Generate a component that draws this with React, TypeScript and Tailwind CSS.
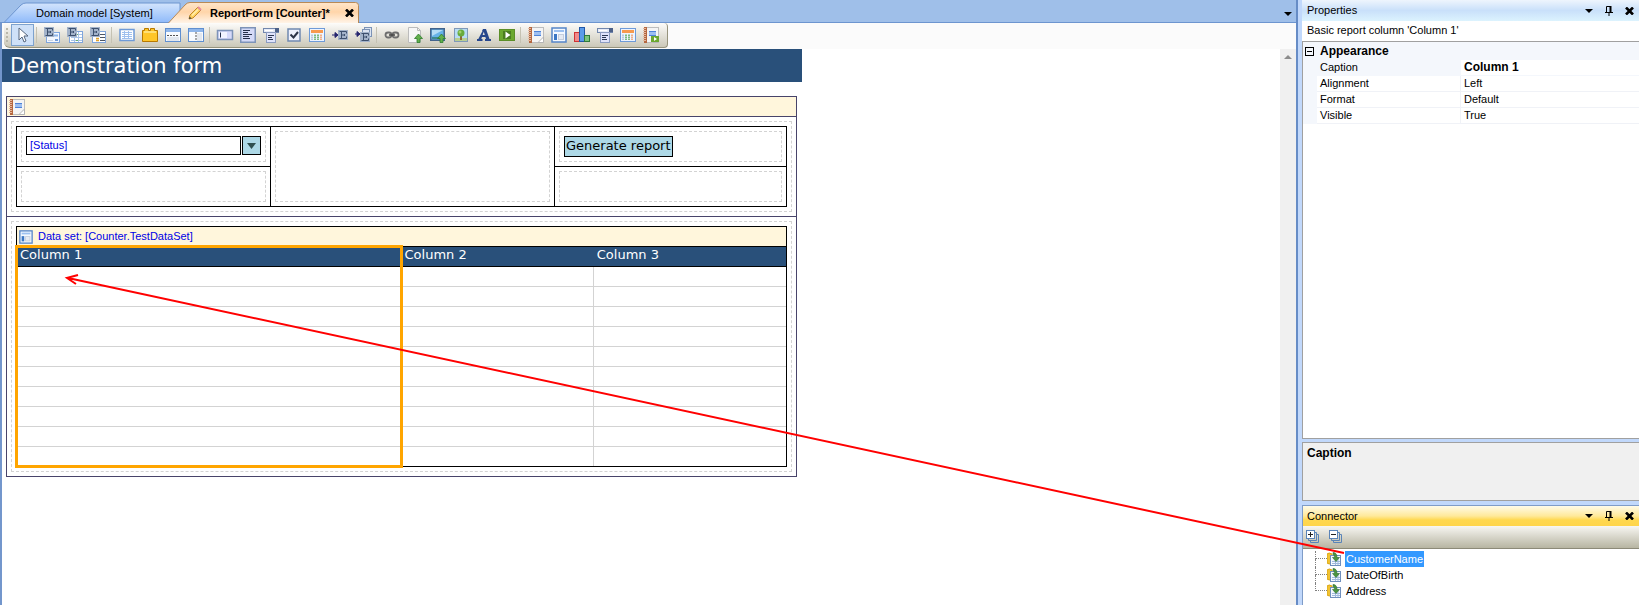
import type { ReactNode } from "react";

const E = () => (
  <g>
    <rect x="0" y="0" width="10" height="10" fill="#a3b3ca" />
    <path d="M1.500 1.500h7v2M3.500 1.500v7M1.500 8.500h7v-2M3.500 5h3M6.500 4v2" stroke="#3d506e" fill="none" />
  </g>
);

const Win = ({ children }: { children?: ReactNode }) => (
  <g>
    <rect x="0.5" y="1.5" width="15" height="13" fill="#f8fbff" stroke="#5f8fd0" />
    <rect x="1" y="2" width="14" height="3" fill="#8fb6ea" />
    {children}
  </g>
);

const Notebook = () => (
  <g>
    <rect x="2.5" y="0.5" width="13" height="15" fill="#f4f4f4" stroke="#bdbdbd" />
    <rect x="1" y="0" width="3" height="16" fill="#b5673f" />
    <path d="M0 1.5h3M0 3.5h3M0 5.5h3M0 7.5h3M0 9.5h3M0 11.5h3M0 13.5h3" stroke="#e3b79d" />
    <rect x="6" y="4" width="7" height="5" fill="#9dbff0" />
    <path d="M6 4.500h7M6 8.500h7" stroke="#4f83d8" />
    <path d="M10 15.500l5.500-5.500v5.500z" fill="#fff" stroke="#b5b5b5" />
  </g>
);

const DataForm = () => (
  <g>
    <rect x="1" y="1" width="14" height="14" fill="#f3f8ff" stroke="#5585c8" strokeWidth="1.500" />
    <rect x="3" y="3" width="10" height="2" fill="#9cc0f0" />
    <rect x="3" y="7" width="3" height="6" fill="#3b76c4" />
    <rect x="7.500" y="7.500" width="5" height="5" fill="#e6eaf2" stroke="#c5cedd" />
  </g>
);

const calendarDays = [7, 9, 11].flatMap((y) => [2, 5, 8, 11].map((x) => ({ x, y })));

const Calendar = () => (
  <g>
    <rect x="0.500" y="1.500" width="15" height="13" fill="#eef4ff" stroke="#6f9bd8" />
    <rect x="2" y="3" width="12" height="3" fill="#f79a4f" />
    {calendarDays.map(({ x, y }) => (
      <rect key={x + "-" + y} x={x} y={y + 0.5} width="2" height="1.500" fill={x === 11 ? "#f0b08a" : x === 2 ? "#b9c9dd" : "#7dbb80"} />
    ))}
  </g>
);

const DropForm = () => (
  <g>
    <rect x="0.500" y="1.500" width="15" height="4" fill="#e7ebf6" stroke="#7287ad" />
    <rect x="12" y="1" width="4" height="4" fill="#4c6189" />
    <rect x="3.500" y="5.500" width="9" height="10" fill="#dfe3fb" stroke="#8c9cc0" />
    <path d="M2 3.500h8" stroke="#fff" />
    <path d="M5 8.500h6M5 10.500h4M5 12.500h5" stroke="#2d3953" />
  </g>
);

const UpArrow = () => (
  <path d="M11.500 7l4 4.500h-2.500v4h-3v-4h-2.500z" fill="#63b04c" stroke="#2f7d2d" strokeWidth="0.800" />
);

const icons: Record<string, ReactNode> = {
  "Select": (
    <path d="M4 1v12l3-3 2 5 2-1-2-5h4z" fill="#fff" stroke="#56677f" strokeLinejoin="round" />
  ),
  "Data view": (
    <g>
      <rect x="2.500" y="5.500" width="13" height="10" fill="#f3f7fe" stroke="#7fa5dc" />
      <path d="M9 8.500h5" stroke="#8fb6ea" strokeWidth="2" />
      <path d="M4 13.500h5" stroke="#c9d3e2" />
      <rect x="11" y="12" width="3" height="2" fill="#6f9bd8" />
      <E />
    </g>
  ),
  "Data grid": (
    <g>
      <rect x="2.500" y="4.500" width="13" height="11" fill="#fff" stroke="#7fa5dc" />
      <path d="M4 7.500h11M4 10.500h11M4 13.500h11M7.500 5v10M11.500 5v10" stroke="#a9c4e8" />
      <path d="M9 7.500h2M9 13.500h2" stroke="#66b069" />
      <E />
    </g>
  ),
  "Template grid": (
    <g>
      <rect x="2.500" y="4.500" width="13" height="11" fill="#fff" stroke="#7fa5dc" />
      <path d="M10 7.500h5M10 10.500h5M10 13.500h5" stroke="#4d5563" />
      <path d="M6 11.500h3M6 13.500h3" stroke="#e0a22d" strokeWidth="1.500" />
      <E />
    </g>
  ),
  "Table": (
    <g>
      <rect x="1" y="2.500" width="14" height="11" fill="#fff" stroke="#6f9bd8" strokeWidth="1.500" />
      <path d="M3 5.500h10M3 7.500h10M3 9.500h10M3 11.500h10M5.500 4v8M9.500 4v8" stroke="#9fc0ee" />
    </g>
  ),
  "Tab control": (
    <g>
      <path d="M0.500 14.500v-11h2v-2h4v2h2v-2h4v2h3v11z" fill="#ffc629" stroke="#b77900" />
      <path d="M2 5h12" stroke="#ffe892" strokeWidth="1.500" />
    </g>
  ),
  "Horizontal split": (
    <g>
      <Win />
      <path d="M2 8.500h12" stroke="#555" strokeDasharray="2 1" />
      <rect x="2" y="10" width="12" height="4" fill="#e2e7ee" />
    </g>
  ),
  "Vertical split": (
    <g>
      <Win />
      <rect x="9" y="6" width="5" height="8" fill="#e2e7ee" />
      <path d="M8 5v9" stroke="#555" strokeDasharray="2 1" />
    </g>
  ),
  "Text box": (
    <g>
      <rect x="0.500" y="3.500" width="15" height="9" fill="#d6dafa" stroke="#7d93b8" strokeWidth="1.500" />
      <rect x="2" y="5" width="8" height="6" fill="#f2f4ff" />
      <path d="M3.500 5.500v5" stroke="#222e4a" />
    </g>
  ),
  "Text area": (
    <g>
      <rect x="0.750" y="0.750" width="14.500" height="14.500" fill="#d5daf8" stroke="#7d93b8" strokeWidth="1.500" />
      <path d="M3 3.500h7M3 5.500h5M3 7.500h9M3 9.500h6M3 11.500h7" stroke="#26304b" />
    </g>
  ),
  "Drop-down": <DropForm />,
  "Check box": (
    <g>
      <rect x="2" y="2" width="12" height="12" fill="#eef1fd" stroke="#7089b0" strokeWidth="1.500" />
      <path d="M4.500 7.500l3 3 4.500-5.500" stroke="#2c3448" strokeWidth="2" fill="none" />
    </g>
  ),
  "Date picker": <Calendar />,
  "Reference selector": (
    <g>
      <g transform="translate(6 3)"><E /></g>
      <path d="M0 8h3V5.500l3 2.500-3 2.500V8" fill="#25256e" stroke="#25256e" />
    </g>
  ),
  "Reference set selector": (
    <g>
      <rect x="9.500" y="0.500" width="7" height="9" fill="#dbe4f2" stroke="#7c93b6" />
      <rect x="7.500" y="2.500" width="7" height="9" fill="#dbe4f2" stroke="#7c93b6" />
      <g transform="translate(5 5)"><E /></g>
      <path d="M0 7h2V4.500l3 2.500-3 2.500V7" fill="#25256e" stroke="#25256e" />
    </g>
  ),
  "Link": (
    <g fill="none" stroke="#6e6e6e" strokeWidth="1.800">
      <rect x="1.500" y="5.500" width="6" height="5" rx="2.500" />
      <rect x="8.500" y="5.500" width="6" height="5" rx="2.500" />
      <path d="M5 8h6" stroke="#444" strokeWidth="1.500" />
    </g>
  ),
  "File upload": (
    <g>
      <path d="M1.500 0.500h9l3 3v12h-12z" fill="#f7f7f7" stroke="#bcbcbc" />
      <path d="M10.500 0.500v3h3" stroke="#bcbcbc" fill="none" />
      <UpArrow />
    </g>
  ),
  "Image upload": (
    <g>
      <rect x="0.750" y="1.750" width="13.500" height="11.500" fill="#66b2e8" stroke="#43648c" strokeWidth="1.500" />
      <path d="M2 3h11l-11 6z" fill="#b5dcf6" />
      <path d="M2 11h10" stroke="#3e8a8f" strokeWidth="2" />
      <UpArrow />
    </g>
  ),
  "Image": (
    <g>
      <rect x="1.500" y="1.500" width="13" height="13" fill="#b8dcf5" stroke="#8099b8" />
      <rect x="2" y="11" width="12" height="3" fill="#b9cf91" />
      <path d="M8 8v5" stroke="#8b6a3a" strokeWidth="2" />
      <circle cx="8" cy="6" r="3.500" fill="#67ab3c" />
      <circle cx="7" cy="5" r="1.500" fill="#9fd16d" />
    </g>
  ),
  "Label": (
    <path d="M7 2h3l3.500 10h1.500v2h-6v-2h1l-.6-2h-3.400l-.7 2h1.200v2h-5.500v-2h1.300L6.500 4H6zM6.600 8h2.200L7.800 4.800z" fill="#27478c" />
  ),
  "Action button": (
    <g>
      <rect x="0.500" y="2.500" width="15" height="11" fill="#6ba82f" stroke="#5c8f28" />
      <rect x="4" y="4" width="8" height="8" fill="#4a7e1f" />
      <path d="M6.500 4.500l5 3.500-5 3.500z" fill="#fff" />
    </g>
  ),
  "Report": <Notebook />,
  "Report data set": <DataForm />,
  "Chart": (
    <g>
      <rect x="0.500" y="5.500" width="5" height="9" fill="#f08a8a" stroke="#d03232" />
      <rect x="5.500" y="0.500" width="5" height="14" fill="#5b9be8" stroke="#2258a8" />
      <rect x="10.500" y="8.500" width="5" height="6" fill="#7cc47c" stroke="#2f7b3a" />
    </g>
  ),
  "Report drop-down": <DropForm />,
  "Report date range": <Calendar />,
  "Generate report": (
    <g>
      <Notebook />
      <rect x="8" y="9" width="8" height="6" fill="#6ba82f" />
      <path d="M11 10l3 2-3 2z" fill="#fff" />
    </g>
  ),
};

const Icon = ({ children }: { children: ReactNode }) => (
  <svg viewBox="0 0 16 16" className="size-4 shrink-0 overflow-visible" aria-hidden="true">{children}</svg>
);

const groups: string[][] = [
  ["Select"],
  ["Data view", "Data grid", "Template grid"],
  ["Table", "Tab control", "Horizontal split", "Vertical split"],
  ["Text box", "Text area", "Drop-down", "Check box", "Date picker", "Reference selector", "Reference set selector"],
  ["Link", "File upload", "Image upload", "Image", "Label", "Action button"],
  ["Report", "Report data set", "Chart", "Report drop-down", "Report date range", "Generate report"],
];

const Triangle = () => (
  <svg viewBox="0 0 8 4" className="h-1 w-2" aria-hidden="true"><path d="M0 0h8L4 4z" fill="currentColor" /></svg>
);

const Cross = () => (
  <svg viewBox="0 0 9 8" className="h-2 w-[9px]" aria-hidden="true">
    <path d="M1 0.500l7 7M8 0.500l-7 7" stroke="#000" strokeWidth="2.600" />
  </svg>
);

const Pin = () => (
  <svg viewBox="0 0 8 10" className="h-[10px] w-2" aria-hidden="true">
    <path d="M1.500 6V0.500h4V6M0 6.500h8M4 7v3" stroke="#000" fill="none" />
    <path d="M5.500 0v6" stroke="#000" strokeWidth="2" />
  </svg>
);

function TabStrip() {
  return (
    <div className="relative flex h-[23px] items-stretch bg-[#9fbfe9]">
      <svg className="absolute inset-0 h-full w-full" aria-hidden="true">
        <defs>
          <linearGradient id="blueTab" x1="0" y1="0" x2="0" y2="1">
            <stop offset="0" stopColor="#d3e4fc" />
            <stop offset="0.500" stopColor="#b2d0fb" />
            <stop offset="1" stopColor="#8fbafa" />
          </linearGradient>
          <linearGradient id="orangeTab" x1="0" y1="0" x2="0" y2="1">
            <stop offset="0" stopColor="#ffe6cb" />
            <stop offset="0.450" stopColor="#ffd5a9" />
            <stop offset="1" stopColor="#fff5ea" />
          </linearGradient>
        </defs>
        <rect x="0" y="22" width="100%" height="1" fill="#6d95cf" />
        <path d="M4 22.500L21 5q2-2 5-2H180v19.500z" fill="url(#blueTab)" stroke="#6d95cf" />
        <path d="M168 23.500L185 5q2-2.500 5-2.500H355.500q3 0 3 3V23.500z" fill="url(#orangeTab)" stroke="#b98a56" />
      </svg>
      <button className="relative flex w-[176px] items-center pt-1 pl-9 whitespace-nowrap">Domain model [System]</button>
      <div className="relative flex w-[182px] items-center justify-between pt-[3px] pr-1 pl-3">
        <button className="flex items-center gap-2 font-bold whitespace-nowrap">
          <svg viewBox="0 0 14 14" className="size-[14px]" aria-hidden="true">
            <path d="M1 13l1-4 8-8 3 3-8 8z" fill="#ffd262" stroke="#c08a28" />
            <path d="M4 9.500l6-6" stroke="#fff0b0" strokeWidth="1.500" />
            <path d="M1 13l.6-2.500 2 2z" fill="#444" />
            <path d="M10 1l3 3" stroke="#e78ba0" strokeWidth="2" />
          </svg>
          ReportForm [Counter]*
        </button>
        <button aria-label="Close tab"><Cross /></button>
      </div>
      <button className="relative mt-1 ml-auto px-1" aria-label="Open documents"><Triangle /></button>
    </div>
  );
}

function Toolbar() {
  return (
    <div className="h-[26px] shrink-0 bg-[#fbfbfb] pl-[2px]">
      <div className="flex h-[25px] w-fit items-center rounded-r-sm rounded-bl-md border-r border-b border-[#96937c] bg-linear-to-b from-[#fdfcfa] to-[#cbc8b9] pr-[5px] pl-[2px]">
        <svg viewBox="0 0 2 16" className="mr-[3px] h-4 w-[2px]" aria-hidden="true">
          <path d="M1 1v15" stroke="#b9b7aa" strokeWidth="2" strokeDasharray="2 2" />
        </svg>
        {groups.map((group, g) => (
          <div key={g} className="flex items-center">
            {g > 0 && <span className="mr-[3px] ml-[2px] h-4 w-px bg-[#c5c2b3]" />}
            {group.map((name) => (
              <button
                key={name}
                aria-label={name}
                className={
                  name === "Select"
                    ? "flex h-[22px] w-[23px] items-center justify-center border border-[#7da2ce] bg-[#cfe1f8]"
                    : "flex h-[22px] w-[23px] items-center justify-center"
                }
              >
                <Icon>{icons[name]}</Icon>
              </button>
            ))}
          </div>
        ))}
      </div>
    </div>
  );
}

const Dashed = ({ children }: { children?: ReactNode }) => (
  <div className="h-full border border-dashed border-[#d3d3d3] p-1">{children}</div>
);

function FormGrid() {
  return (
    <div className="grid grid-cols-[254fr_284fr_231fr] grid-rows-[40px_39px] border border-black">
      <div className="border-r border-b border-black p-1">
        <Dashed>
          <div className="flex gap-px">
            <select aria-label="Status" className="h-[19px] min-w-0 flex-1 appearance-none border border-black bg-white pl-[3px] text-[#0000e6]">
              <option>[Status]</option>
            </select>
            <span className="flex size-[19px] items-center justify-center border border-black bg-[#add8e6] text-[#2f4f4f]">
              <svg viewBox="0 0 9 6" className="h-[6px] w-[9px]" aria-hidden="true"><path d="M0 0h9L4.500 6z" fill="currentColor" /></svg>
            </span>
          </div>
        </Dashed>
      </div>
      <div className="row-span-2 border-r border-black p-1"><Dashed /></div>
      <div className="border-b border-black p-1">
        <Dashed>
          <button className="block h-[21px] border border-black bg-[#add8e6] px-px pb-[2px] font-['DejaVu_Sans',sans-serif] text-[13px] leading-4 whitespace-nowrap">
            Generate report
          </button>
        </Dashed>
      </div>
      <div className="border-r border-black p-1"><Dashed /></div>
      <div className="p-1"><Dashed /></div>
    </div>
  );
}

function DataSet() {
  return (
    <div className="border border-black">
      <div className="flex h-5 items-center gap-[5px] border-b border-black bg-[#fff6dc] pl-[2px] text-[#0000e6]">
        <svg viewBox="0 0 16 16" className="size-[14px]" aria-hidden="true"><DataForm /></svg>
        Data set: [Counter.TestDataSet]
      </div>
      <div className="relative">
        <table className="w-full table-fixed border-separate border-spacing-0 font-['DejaVu_Sans',sans-serif] text-[13px]">
          <colgroup>
            <col className="w-1/2" />
            <col className="w-1/4" />
            <col className="w-1/4" />
          </colgroup>
          <thead>
            <tr className="h-5 bg-[#29507a] text-left text-white">
              {["Column 1", "Column 2", "Column 3"].map((c) => (
                <th key={c} className="border-b border-black px-[3px] py-0 align-top leading-4 font-normal">{c}</th>
              ))}
            </tr>
          </thead>
          <tbody className="[&>tr:last-child]:h-[19px] [&>tr:last-child>td]:border-b-0">
            {Array.from({ length: 10 }, (_, r) => (
              <tr key={r} className="h-5">
                <td className="border-r border-b border-[#d3d3d3] p-0" />
                <td className="border-r border-b border-[#d3d3d3] p-0" />
                <td className="border-b border-[#d3d3d3] p-0" />
              </tr>
            ))}
          </tbody>
        </table>
        <div className="absolute -top-[2px] -bottom-[2px] -left-[2px] w-[calc(50%+3px)] border-3 border-[#ffa500]" />
      </div>
    </div>
  );
}

function Designer() {
  return (
    <div className="min-w-0 flex-1 bg-white">
      <h1 className="h-[33px] w-full max-w-[800px] bg-[#29507a] pl-2 font-['DejaVu_Sans',sans-serif] text-[21px] leading-[35px] text-white">
        Demonstration form
      </h1>
      <div className="mt-[14px] ml-1 w-full max-w-[791px] border border-[#48446a]">
        <div className="flex h-5 items-center border-b border-[#48446a] bg-[#fff6dc] pl-[2px]">
          <Icon><Notebook /></Icon>
        </div>
        <div className="border-b border-[#48446a] p-1">
          <Dashed><FormGrid /></Dashed>
        </div>
        <div className="p-1">
          <Dashed><DataSet /></Dashed>
        </div>
      </div>
    </div>
  );
}

const PanelButtons = ({ name }: { name: string }) => (
  <div className="ml-auto flex items-center gap-3 pr-[5px]">
    <button aria-label={name + " options"}><Triangle /></button>
    <button aria-label={"Pin " + name}><Pin /></button>
    <button aria-label={"Close " + name}><Cross /></button>
  </div>
);

const properties = [
  ["Alignment", "Left"],
  ["Format", "Default"],
  ["Visible", "True"],
];

function Properties() {
  return (
    <section className="flex flex-1 flex-col">
      <header className="flex h-[21px] items-center bg-linear-to-b from-[#eef5fd] via-[#c9e0fa] to-[#dcf3fe] pl-[5px]">
        <h2>Properties</h2>
        <PanelButtons name="Properties" />
      </header>
      <p className="h-5 bg-white pl-[5px] leading-[18px]">Basic report column 'Column 1'</p>
      <div className="flex-1 border-y border-l border-[#a0a0a0] bg-white">
        <table className="w-full table-fixed border-separate border-spacing-0 text-left [&_td]:leading-[15px] [&_th]:leading-[15px]">
          <colgroup>
            <col className="w-[14px]" />
            <col className="w-36" />
            <col />
          </colgroup>
          <tbody>
            <tr className="h-[18px] bg-[#f4f7fc]">
              <td className="p-0">
                <button className="ml-[2px] flex size-[9px] items-center justify-center border border-black" aria-label="Collapse Appearance">
                  <span className="h-px w-[5px] bg-black" />
                </button>
              </td>
              <th colSpan={2} className="p-0 pl-[3px] text-[12px] font-bold">Appearance</th>
            </tr>
            <tr className="h-4">
              <td className="bg-[#f4f7fc] p-0" />
              <th className="border-r border-b border-[#f4f7fc] bg-[#f4f7fc] p-0 pl-[3px] font-normal">Caption</th>
              <td className="border-b border-[#f4f7fc] p-0 pl-[3px] text-[12px] font-bold">Column 1</td>
            </tr>
            {properties.map(([name, value]) => (
              <tr key={name} className="h-4">
                <td className="bg-[#f4f7fc] p-0" />
                <th className="border-r border-b border-[#f0f2f7] p-0 pl-[3px] font-normal">{name}</th>
                <td className="border-b border-[#f0f2f7] p-0 pl-[3px]">{value}</td>
              </tr>
            ))}
          </tbody>
        </table>
      </div>
      <div className="mt-[3px] h-[59px] border border-r-0 border-[#a0a0a0] bg-[#f0f0f0] pt-[2px] pl-1 text-[12px] leading-4 font-bold">Caption</div>
    </section>
  );
}

const TreeIcon = () => (
  <svg viewBox="0 0 14 14" className="size-[14px]" aria-hidden="true">
    <path d="M0 2q2-2 5 0v9q-3 2-5 0z" fill="#f1c232" stroke="#d9a514" />
    <rect x="3.500" y="3.500" width="10" height="10" fill="#f4f8ff" stroke="#6f8fbd" />
    <path d="M5 11.500h8M5 9.500h8M8.500 5v8M11 5v8" stroke="#9fb9dd" />
    <path d="M6 0.500q4 0 4 5h2.500L9 9.500 5.500 5.500H7.500q0-3-1.500-3z" fill="#4a9440" stroke="#2e6b2c" strokeWidth="0.600" />
  </svg>
);

const ExpandIcon = ({ plus }: { plus?: boolean }) => (
  <svg viewBox="0 0 13 13" className="size-[13px]" aria-hidden="true">
    <path d="M4.500 10.500v2h8v-8h-2M2.500 8.500v2h8v-8h-2" fill="none" stroke="#5a84b8" />
    <rect x="0.500" y="0.500" width="8" height="8" fill="#fff" stroke="#5a84b8" />
    <path d="M2 4.500h5" stroke="#222" />
    {plus && <path d="M4.500 2v5" stroke="#222" />}
  </svg>
);

function Connector() {
  return (
    <section className="mt-1 shrink-0 border-t border-l border-[#7f9cc8]">
      <header className="flex h-5 items-center bg-[linear-gradient(#fffbe8_0%,#ffe99a_50%,#ffd84f_70%,#ffd54a_100%)] pl-1">
        <h2>Connector</h2>
        <PanelButtons name="Connector" />
      </header>
      <div className="flex h-[23px] items-center gap-[10px] border-b border-[#8c8a78] bg-linear-to-b from-[#f8f7f3] to-[#b7b5a2] pb-[2px] pl-[3px]">
        <button aria-label="Expand all"><ExpandIcon plus /></button>
        <button aria-label="Collapse all"><ExpandIcon /></button>
      </div>
      <ul className="h-14 bg-white pt-[2px] pl-3">
        {["CustomerName", "DateOfBirth", "Address"].map((name, i) => (
          <li key={name} className="flex h-4 items-center">
            <span className="flex h-full w-3 flex-col">
              <span className="h-1/2 w-full border-b border-l border-dotted border-[#808080]" />
              {i < 2 && <span className="h-1/2 border-l border-dotted border-[#808080]" />}
            </span>
            <TreeIcon />
            <button className={i === 0 ? "ml-1 h-4 bg-[#3399ff] px-px leading-4 text-white" : "ml-1 h-4 px-px leading-4"}>{name}</button>
          </li>
        ))}
      </ul>
    </section>
  );
}

export default function App() {
  return (
    <div className="relative flex min-h-screen bg-[#c1d8fb] font-['Liberation_Sans',Arial,sans-serif] text-[11px] leading-[13px] text-black">
      <main className="flex min-w-0 flex-1 flex-col border-r-2 border-[#668cc6]">
        <TabStrip />
        <div className="flex flex-1 flex-col border-l-2 border-[#7396cc] bg-white">
          <Toolbar />
          <div className="flex flex-1">
            <Designer />
            <div className="flex w-4 flex-col items-center bg-[#f0f0f0] pt-[6px]">
              <svg viewBox="0 0 8 4" className="h-1 w-2" aria-hidden="true"><path d="M0 4h8L4 0z" fill="#8c8c8c" /></svg>
            </div>
          </div>
        </div>
      </main>
      <aside className="ml-1 flex w-[337px] shrink-0 flex-col">
        <Properties />
        <Connector />
      </aside>
      <svg className="pointer-events-none absolute inset-0 h-full w-full" aria-hidden="true">
        <path d="M68 278L1344 553M78 275L67 278L76 284" fill="none" stroke="#f00" strokeWidth="2" />
      </svg>
    </div>
  );
}
